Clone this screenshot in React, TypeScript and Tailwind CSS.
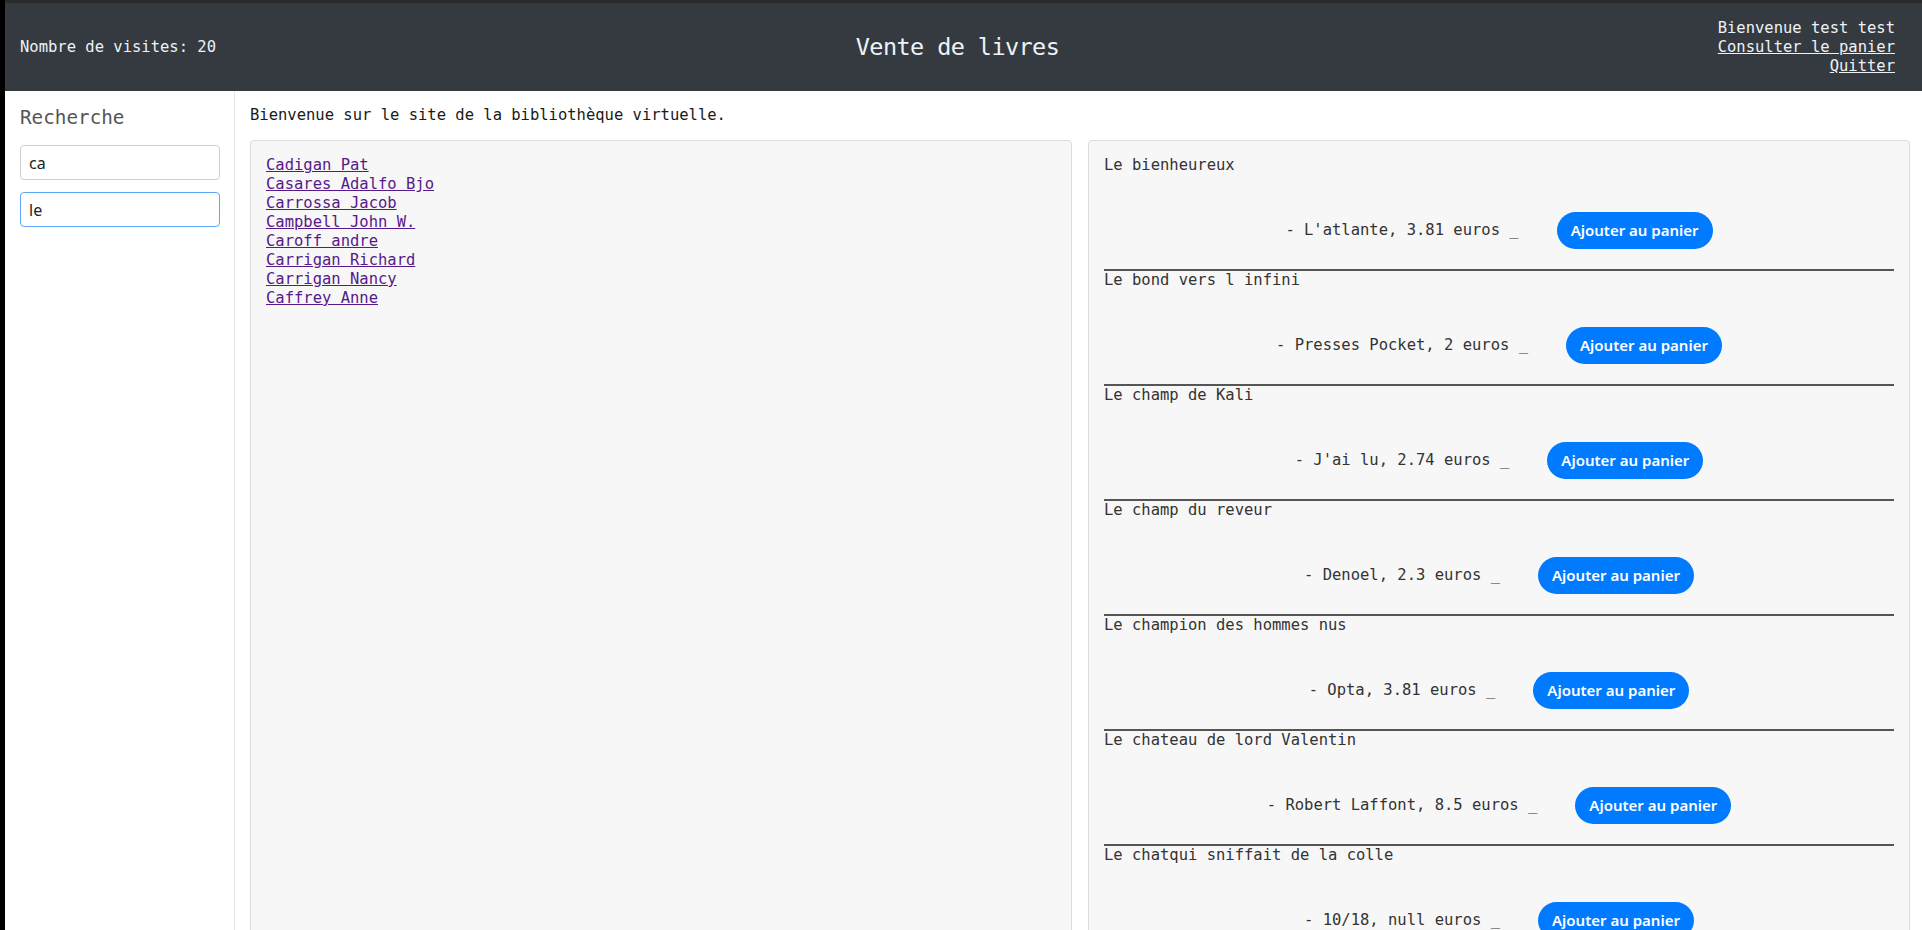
const mono = { fontFamily: '"DejaVu Sans Mono", "Liberation Mono", monospace' };

const auteurs = [
  "Cadigan Pat",
  "Casares Adalfo Bjo",
  "Carrossa Jacob",
  "Campbell John W.",
  "Caroff andre",
  "Carrigan Richard",
  "Carrigan Nancy",
  "Caffrey Anne",
];

const livres = [
  { titre: "Le bienheureux", info: "- L'atlante, 3.81 euros _" },
  { titre: "Le bond vers l infini", info: "- Presses Pocket, 2 euros _" },
  { titre: "Le champ de Kali", info: "- J'ai lu, 2.74 euros _" },
  { titre: "Le champ du reveur", info: "- Denoel, 2.3 euros _" },
  { titre: "Le champion des hommes nus", info: "- Opta, 3.81 euros _" },
  { titre: "Le chateau de lord Valentin", info: "- Robert Laffont, 8.5 euros _" },
  { titre: "Le chatqui sniffait de la colle", info: "- 10/18, null euros _" },
  { titre: "Le chemin des chimeres", info: "- Folio, 4.2 euros _" },
];

export default function App() {
  return (
    <div className="min-h-screen bg-black pl-[5px]" style={mono}>
      {/* header */}
      <header className="flex h-[91px] items-center border-t-[3px] border-[#2a2a2a] bg-[#343a40] pl-[15px] pr-[27px] text-[15.5px] leading-[19px] text-[#eef2f6]">
        <div className="flex-1">Nombre de visites: 20</div>
        <h1 className="text-[23.5px] leading-[28px] tracking-tight">Vente de livres</h1>
        <div className="flex flex-1 flex-col items-end">
          <span>Bienvenue test test</span>
          <a href="#" className="underline">Consulter le panier</a>
          <a href="#" className="underline">Quitter</a>
        </div>
      </header>

      <div className="flex bg-white">
        {/* sidebar */}
        <aside className="w-[230px] shrink-0 border-r border-[#e6e6e6] px-[15px] pt-[15px]">
          <h2 className="text-[19.3px] leading-[23px] text-[#555]">Recherche</h2>
          <div className="mt-[16px] flex flex-col gap-[12px]" style={{ fontFamily: '"Noto Sans", sans-serif' }}>
            <input
              defaultValue="ca"
              className="h-[35px] w-[200px] rounded-[4px] border border-[#cfcfcf] px-[8px] text-[16px] text-[#222] outline-none"
            />
            <input
              defaultValue="le"
              className="h-[35px] w-[200px] rounded-[4px] border border-[#5ea6f7] px-[8px] text-[16px] text-[#222] outline-none"
            />
          </div>
        </aside>

        {/* main */}
        <main className="flex-1 pl-[15px] pr-[12px] pt-[15px] text-[15.5px] leading-[19px]">
          <p className="text-[#1a1a1a]">Bienvenue sur le site de la bibliothèque virtuelle.</p>
          <div className="mt-[15px] grid grid-cols-2 gap-[16px]">
            <div className="rounded-[4px] border border-[#dcdcdc] bg-[#f7f7f7] p-[15px]">
              <ul className="flex flex-col">
                {auteurs.map((a) => (
                  <li key={a}>
                    <a href="#" className="text-[#551a8b] underline">{a}</a>
                  </li>
                ))}
              </ul>
            </div>

            <div className="rounded-[4px] border border-[#dcdcdc] bg-[#f7f7f7] p-[15px] text-[#333]">
              {livres.map((l) => (
                <div key={l.titre}>
                  <p>{l.titre}</p>
                  <div className="mt-[37px] flex h-[37px] items-center justify-center">
                    <span>{l.info}</span>
                    <button
                      className="ml-[38px] h-[37px] rounded-full bg-[#007bff] px-[14px] text-[15px] font-semibold text-white"
                      style={{ fontFamily: '"Noto Sans", sans-serif' }}
                    >
                      Ajouter au panier
                    </button>
                  </div>
                  <hr className="mt-[20px] border-t-2 border-[#555]" />
                </div>
              ))}
            </div>
          </div>
        </main>
      </div>
    </div>
  );
}
